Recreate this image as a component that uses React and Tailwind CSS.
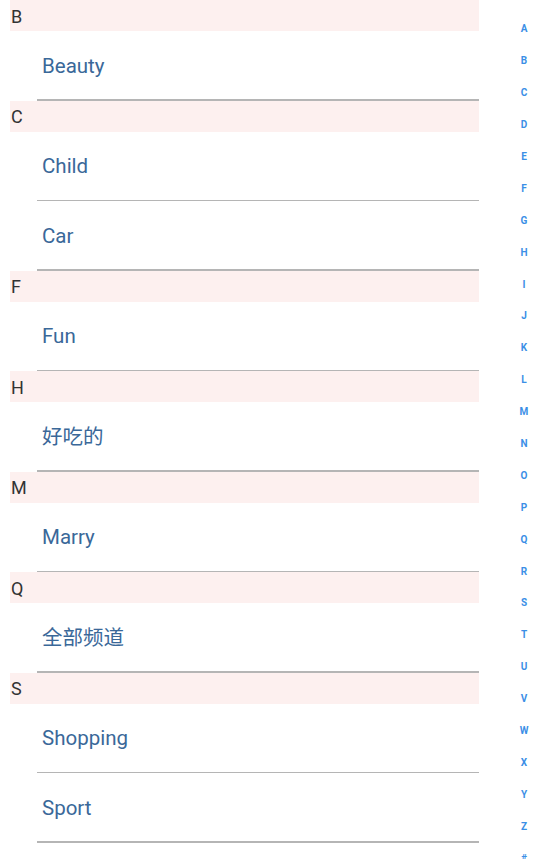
import React from "react";

const groups = [
  ["B", ["Beauty"]],
  ["C", ["Child", "Car"]],
  ["F", ["Fun"]],
  ["H", ["好吃的"]],
  ["M", ["Marry"]],
  ["Q", ["全部频道"]],
  ["S", ["Shopping", "Sport"]],
];

const letters = "ABCDEFGHIJKLMNOPQRSTUVWXYZ#".split("");

export default function App() {
  return (
    <div
      className="w-[547px] h-[859px] overflow-hidden bg-white flex"
      style={{ fontFamily: 'Roboto, "Noto Sans CJK SC", sans-serif' }}
    >
      <div className="ml-[10px] w-[469px] flex flex-col">
        {groups.map(([g, items]) => (
          <div key={g} className="flex flex-col">
            <div className="h-[31px] shrink-0 bg-[#fdf0ef] flex items-center pl-[1px] pt-[2px] text-[18px] text-[#333333] leading-none">
              {g}
            </div>
            {items.map((it) => (
              <div key={it} className="h-[69.5px] shrink-0 flex flex-col">
                <div className="flex-1 flex items-center pl-[32px] pt-[2px] text-[20.5px] text-[#3a6899]">
                  {it}
                </div>
                <div className="ml-[27px] h-[1.5px] bg-[#b5b5b5]" />
              </div>
            ))}
          </div>
        ))}
      </div>
      <div className="pl-[35px] pt-[13px] flex flex-col">
        {letters.map((l) => (
          <div
            key={l}
            className="h-[31.9px] w-[20px] shrink-0 flex items-center justify-center text-[10px] font-bold text-[#3b8fe6]"
          >
            {l}
          </div>
        ))}
      </div>
    </div>
  );
}
